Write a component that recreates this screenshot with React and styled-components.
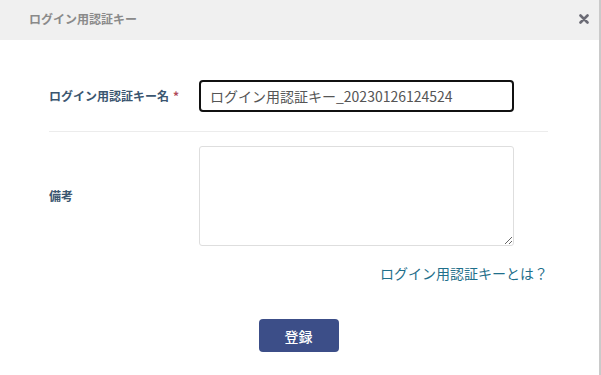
import React from 'react';
import styled, { createGlobalStyle } from 'styled-components';

const GlobalStyle = createGlobalStyle`
    html, body {
        margin: 0;
        padding: 0;
        background: #ffffff;
    }
    body {
        font-family: 'Noto Sans CJK JP', 'Noto Sans', sans-serif;
    }`

const Dialog = styled.div`
    width: 601px;
    height: 375px;
    box-sizing: border-box;
    border-right: 2px solid #cacaca;
    background: #ffffff;
    display: flex;
    flex-direction: column;`

const Header = styled.div`
    height: 40px;
    flex-shrink: 0;
    box-sizing: border-box;
    background: #f0f0f0;
    display: flex;
    align-items: center;
    justify-content: space-between;
    padding: 0 9px 2px 29px;`

const Title = styled.h4`
    margin: 0;
    font-size: 12px;
    font-weight: 700;
    color: #8a8a8a;
    line-height: 1;`

const CloseButton = styled.button`
    border: 0;
    background: transparent;
    padding: 0;
    width: 12px;
    height: 12px;
    display: flex;
    align-items: center;
    justify-content: center;
    cursor: pointer;`

const Body = styled.div`
    padding: 40px 51px 0 49px;
    display: flex;
    flex-direction: column;`

const FormRow = styled.div`
    display: grid;
    grid-template-columns: 150px 315px;
    align-items: center;
    padding-bottom: ${p => p.divided ? '19px' : '0'};
    border-bottom: ${p => p.divided ? '1px solid #ececec' : '0'};
    margin-top: ${p => p.top || 0}px;`

const Label = styled.label`
    font-size: 12px;
    font-weight: 700;
    color: #3b5670;
    line-height: 1;`

const Required = styled.span`
    color: #b04a5a;
    margin-left: 4px;`

const TextInput = styled.input`
    box-sizing: border-box;
    width: 315px;
    height: 32px;
    border: 2px solid #111111;
    border-radius: 4px;
    padding: 0 9px;
    font-family: 'Noto Sans CJK JP', 'Noto Sans', sans-serif;
    font-size: 14px;
    color: #555555;
    outline: none;`

const TextArea = styled.textarea`
    box-sizing: border-box;
    width: 315px;
    height: 100px;
    border: 1px solid #dedede;
    border-radius: 3px;
    padding: 6px 10px;
    font-family: 'Noto Sans CJK JP', 'Noto Sans', sans-serif;
    font-size: 14px;
    resize: both;
    outline: none;
    display: block;`

const HelpRow = styled.div`
    display: flex;
    justify-content: flex-end;
    margin-top: 17px;`

const HelpLink = styled.a`
    font-size: 14px;
    color: #1f6f8b;
    text-decoration: none;
    line-height: 20px;
    cursor: pointer;`

const Footer = styled.div`
    display: flex;
    justify-content: center;
    margin-top: 36px;`

const SubmitButton = styled.button`
    width: 80px;
    height: 33px;
    border: 0;
    border-radius: 4px;
    background: #3c4e88;
    color: #ffffff;
    font-family: 'Noto Sans CJK JP', 'Noto Sans', sans-serif;
    font-size: 14px;
    font-weight: 500;
    cursor: pointer;`

const App = () => {
    return (
        <>
        <GlobalStyle />
        <Dialog>
            <Header>
                <Title>ログイン用認証キー</Title>
                <CloseButton aria-label='close'>
                    <svg width='10' height='10' viewBox='0 0 10 10'>
                        <path d='M1.5 1.5 L8.5 8.5 M8.5 1.5 L1.5 8.5' stroke='#6b6b75' strokeWidth='2.6' strokeLinecap='round' />
                    </svg>
                </CloseButton>
            </Header>
            <Body>
                <FormRow divided>
                    <Label>ログイン用認証キー名<Required>*</Required></Label>
                    <TextInput type='text' defaultValue='ログイン用認証キー_20230126124524' />
                </FormRow>
                <FormRow top={14}>
                    <Label>備考</Label>
                    <TextArea />
                </FormRow>
                <HelpRow>
                    <HelpLink>ログイン用認証キーとは？</HelpLink>
                </HelpRow>
                <Footer>
                    <SubmitButton type='button'>登録</SubmitButton>
                </Footer>
            </Body>
        </Dialog>
        </>
    );
}

export default App;
